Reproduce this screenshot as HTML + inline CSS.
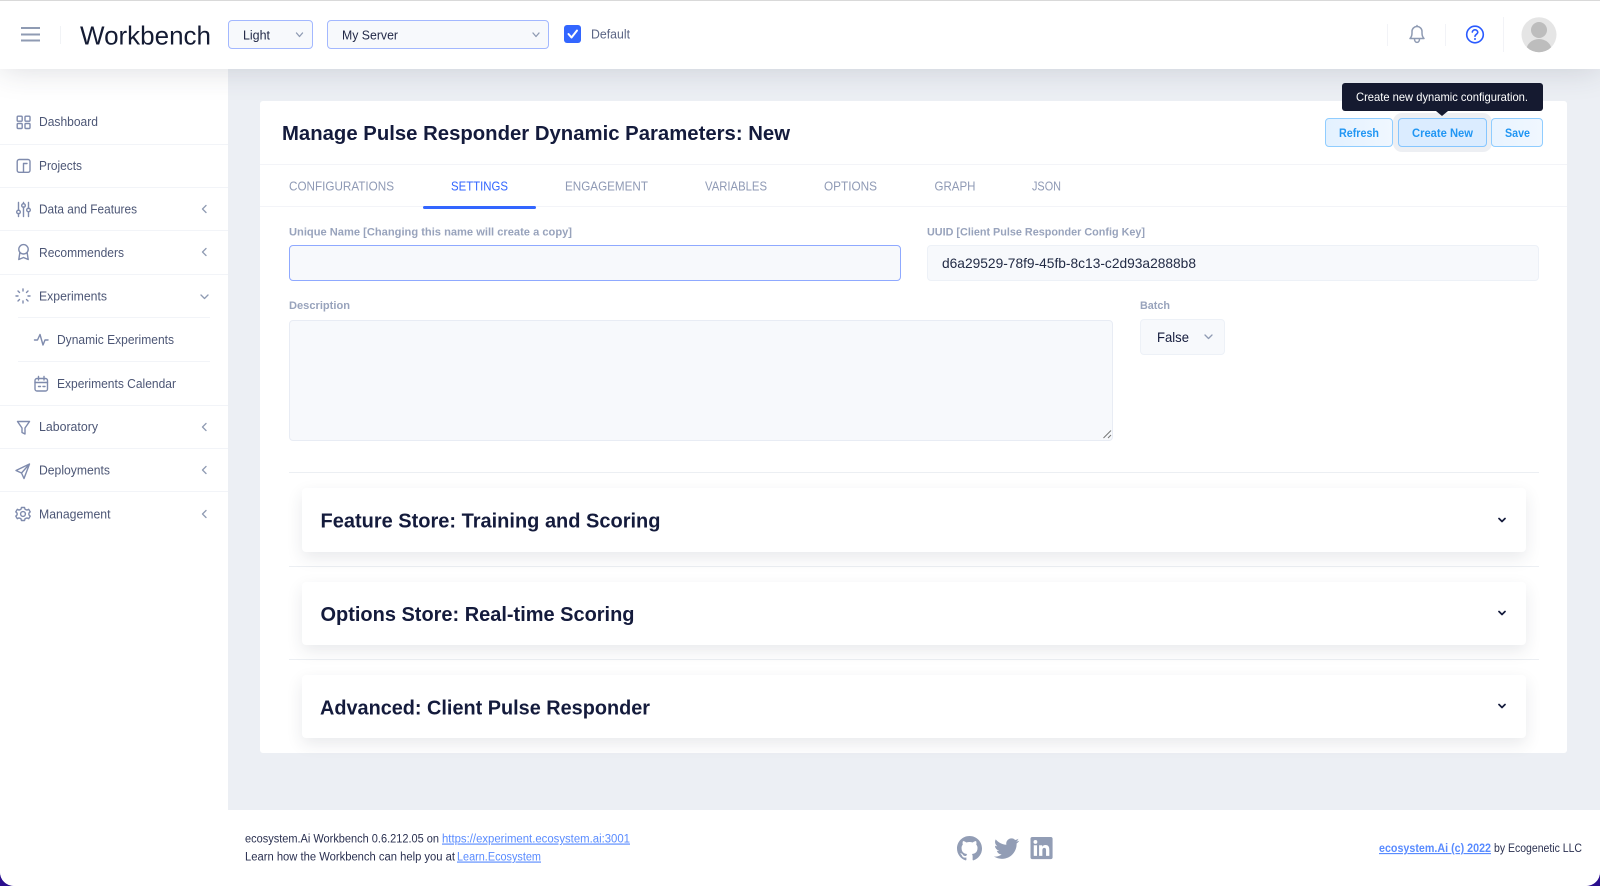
<!DOCTYPE html>
<html lang="en">
<head>
<meta charset="utf-8">
<title>Workbench</title>
<style>
html,body{margin:0;padding:0;width:1600px;height:886px;overflow:hidden;background:#2b0f8e;font-family:"Liberation Sans",sans-serif}
#app{position:absolute;left:0;top:0;width:1600px;height:886px;background:#ecEff4;border-radius:0 0 14px 14px;overflow:hidden}
.b{position:absolute;box-sizing:border-box}
svg{position:absolute;left:0;top:0}
text{font-family:"Liberation Sans",sans-serif}
.n{font-size:13px;fill:#4c5675}
.tab{font-size:13px;fill:#8f9ab5}
.lb{font-size:11px;font-weight:700;fill:#98a3bc}
.btn{font-size:11.5px;font-weight:700;fill:#2196f3}
.h{font-size:20px;font-weight:700;fill:#141b3c}
.f{font-size:11.5px;fill:#2a3050}
.l{font-size:11.5px;fill:#598bff;text-decoration:underline}
.ic{fill:none;stroke:#7f8bad;stroke-width:1.4;stroke-linecap:round;stroke-linejoin:round}
.ch{fill:none;stroke:#8f9bb3;stroke-width:1.3;stroke-linecap:round;stroke-linejoin:round}
.dk{fill:none;stroke:#141b3c;stroke-width:1.7;stroke-linecap:round;stroke-linejoin:round}
</style>
</head>
<body>
<div id="app">
  <div class="b" style="left:0;top:60px;width:228px;height:826px;background:#fff"></div>
  <div class="b" style="left:228px;top:810px;width:1372px;height:76px;background:#fff"></div>
  <div class="b" style="left:0;top:0;width:1600px;height:69px;background:#fff;border-top:1px solid #d9d9d9;box-shadow:0 0 32px rgba(44,51,73,.18)"></div>

  <div class="b" style="left:260px;top:101px;width:1307px;height:652px;background:#fff;border-radius:3px"></div>
  <div class="b" style="left:260px;top:164px;width:1307px;height:1px;background:#f3f4f8"></div>
  <div class="b" style="left:260px;top:206px;width:1307px;height:1px;background:#f3f4f8"></div>
  <div class="b" style="left:423px;top:206px;width:113px;height:3px;background:#3366ff;border-radius:2px"></div>

  <div class="b" style="left:289px;top:245px;width:612px;height:36px;background:#f7f9fc;border:1px solid #8fa9ff;border-radius:4px"></div>
  <div class="b" style="left:927px;top:245px;width:612px;height:36px;background:#f7f9fc;border:1px solid #edf1f7;border-radius:4px"></div>
  <div class="b" style="left:289px;top:320px;width:824px;height:121px;background:#f7f9fc;border:1px solid #e8ecf4;border-radius:4px"></div>
  <div class="b" style="left:1140px;top:319px;width:85px;height:36px;background:#f7f9fc;border:1px solid #edf1f7;border-radius:4px"></div>

  <div class="b" style="left:289px;top:472px;width:1250px;height:1px;background:#eceff3"></div>
  <div class="b" style="left:289px;top:566px;width:1250px;height:1px;background:#eceff3"></div>
  <div class="b" style="left:289px;top:659px;width:1250px;height:1px;background:#eceff3"></div>
  <div class="b" style="left:302px;top:488px;width:1224px;height:64px;background:#fff;border-radius:4px;box-shadow:0 6px 16px rgba(44,51,73,.10)"></div>
  <div class="b" style="left:302px;top:582px;width:1224px;height:63px;background:#fff;border-radius:4px;box-shadow:0 6px 16px rgba(44,51,73,.10)"></div>
  <div class="b" style="left:302px;top:675px;width:1224px;height:63px;background:#fff;border-radius:4px;box-shadow:0 6px 16px rgba(44,51,73,.10)"></div>

  <div class="b" style="left:228px;top:20px;width:85px;height:29px;background:#f7f9fc;border:1px solid #a3b8ff;border-radius:4px"></div>
  <div class="b" style="left:327px;top:20px;width:222px;height:29px;background:#f7f9fc;border:1px solid #a3b8ff;border-radius:4px"></div>
  <div class="b" style="left:564px;top:25px;width:17px;height:18px;background:#3366ff;border-radius:3px"></div>

  <div class="b" style="left:1325px;top:118px;width:68px;height:29px;background:linear-gradient(90deg,#e3f1ff,#f0f7ff);border:1px solid #90cdff;border-radius:4px"></div>
  <div class="b" style="left:1398px;top:118px;width:89px;height:29px;background:#dbecff;border:1px solid #86c6ff;border-radius:4px;box-shadow:0 0 0 5px rgba(143,155,179,.16)"></div>
  <div class="b" style="left:1491px;top:118px;width:52px;height:29px;background:linear-gradient(90deg,#e9f4ff,#f0f7ff);border:1px solid #90cdff;border-radius:4px"></div>
  <div class="b" style="left:1342px;top:83px;width:201px;height:28px;background:#151a30;border-radius:3px"></div>

  <svg width="1600" height="886" viewBox="0 0 1600 886" xmlns="http://www.w3.org/2000/svg">
    <!-- header -->
    <path d="M21 28H40M21 34.500H40M21 40.500H40" stroke="#8f9bb3" stroke-width="2"/>
    <path d="M60.500 26V44" stroke="#f1f3f6"/>
    <text x="80" y="44.500" font-size="26" fill="#141b33" textLength="131" lengthAdjust="spacingAndGlyphs">Workbench</text>
    <text x="243" y="39.500" font-size="13" fill="#1f2645" textLength="27" lengthAdjust="spacingAndGlyphs">Light</text>
    <text x="342" y="39.500" font-size="13" fill="#1f2645" textLength="56" lengthAdjust="spacingAndGlyphs">My Server</text>
    <path class="ch" d="M296.500 33L299.500 36.500L302.500 33M533 33L536 36.500L539 33"/>
    <path d="M568.500 34L571.500 37.500L577 30.500" fill="none" stroke="#fff" stroke-width="2" stroke-linecap="round" stroke-linejoin="round"/>
    <text x="591" y="38.500" font-size="12.500" fill="#5c6685" textLength="39" lengthAdjust="spacingAndGlyphs">Default</text>

    <path d="M1387.500 24V46M1445.500 24V46M1503.500 17V52" stroke="#f2f3f7"/>
    <path d="M1410 38.500c1.500-1.500 2-3 2-5.500v-1.500a5 5 0 0 1 10 0V33c0 2.500.5 4 2 5.500zM1414.500 39c0 4.500 5 4.500 5 0M1417 26.500V25.500" fill="none" stroke="#8f9bb3" stroke-width="1.500" stroke-linejoin="round" stroke-linecap="round"/>
    <circle cx="1475" cy="34.500" r="8.300" fill="none" stroke="#2a5bff" stroke-width="1.600"/>
    <path d="M1472.300 32a2.800 2.800 0 0 1 5.500.300c0 1.900-2.800 2.100-2.800 4" fill="none" stroke="#2a5bff" stroke-width="1.600" stroke-linecap="round"/>
    <circle cx="1475" cy="39" r="1" fill="#2a5bff"/>
    <clipPath id="av"><circle cx="1539" cy="34.700" r="17.500"/></clipPath>
    <g clip-path="url(#av)">
      <rect x="1520" y="16" width="38" height="38" fill="#e5e5e5"/>
      <circle cx="1539" cy="30" r="8" fill="#bdbdbd"/>
      <ellipse cx="1539" cy="50" rx="12.500" ry="11" fill="#bdbdbd"/>
    </g>

    <!-- sidebar dividers -->
    <path d="M0 144.500H228M0 187.500H228M0 230.500H228M0 274.500H228M18 317.500H210M18 361.500H210M0 405.500H228M0 448.500H228M0 491.500H228" stroke="#f2f4f8"/>

    <!-- sidebar text -->
    <text class="n" x="39" y="126" textLength="59" lengthAdjust="spacingAndGlyphs">Dashboard</text>
    <text class="n" x="39" y="170" textLength="43" lengthAdjust="spacingAndGlyphs">Projects</text>
    <text class="n" x="39" y="213.500" textLength="98" lengthAdjust="spacingAndGlyphs">Data and Features</text>
    <text class="n" x="39" y="257" textLength="85" lengthAdjust="spacingAndGlyphs">Recommenders</text>
    <text class="n" x="39" y="300.500" textLength="68" lengthAdjust="spacingAndGlyphs">Experiments</text>
    <text class="n" x="57" y="344" textLength="117" lengthAdjust="spacingAndGlyphs">Dynamic Experiments</text>
    <text class="n" x="57" y="388" textLength="119" lengthAdjust="spacingAndGlyphs">Experiments Calendar</text>
    <text class="n" x="39" y="431" textLength="59" lengthAdjust="spacingAndGlyphs">Laboratory</text>
    <text class="n" x="39" y="474.500" textLength="71" lengthAdjust="spacingAndGlyphs">Deployments</text>
    <text class="n" x="39" y="518.500" textLength="71.500" lengthAdjust="spacingAndGlyphs">Management</text>

    <!-- sidebar chevrons -->
    <path class="ch" d="M206 205.500L202.500 209L206 212.500M206 248.500L202.500 252L206 255.500M206 423.500L202.500 427L206 430.500M206 466.500L202.500 470L206 473.500M206 510.500L202.500 514L206 517.500M201 295L204.500 298.500L208 295"/>

    <!-- sidebar icons -->
    <g class="ic">
      <rect x="17.200" y="116.200" width="5" height="5" rx="1"/><rect x="25" y="116.200" width="5" height="5" rx="1"/><rect x="17.200" y="123.500" width="5" height="5" rx="1"/><rect x="25" y="123.500" width="5" height="5" rx="1"/>
      <rect x="17.200" y="159.500" width="12.800" height="12.800" rx="2"/><path d="M23.500 172V163.500H27"/>
      <path d="M18.500 202.500V210M18.500 213.500V216.500M23.500 202.500V203.500M23.500 207V216.500M28.500 202.500V208.500M28.500 212V216.500"/><circle cx="18.500" cy="212" r="1.800"/><circle cx="23.500" cy="205.500" r="1.800"/><circle cx="28.500" cy="210" r="1.800"/>
      <circle cx="23.500" cy="249.300" r="4.700"/><path d="M19.800 253L18.800 259.500L23.500 257.500L28.200 259.500L27.200 253"/>
      <path d="M23 289V291M23 301V303M16 296H18M28 296H30M18 291L19.500 292.500M26.500 299.500L28 301M18 301L19.500 299.500M26.500 292.500L28 291"/>
      <path d="M34.500 340H37.500L40 334.500L43 345L45 340H48"/>
      <rect x="35" y="378.500" width="12.500" height="12.500" rx="2"/><path d="M35 382.500H47.500M38.500 376.500V380M44 376.500V380M38.500 386.500H40.500M43 386.500H45"/>
      <path d="M17.500 421.500H29.500L25 428V434L22 432.500V428Z"/>
      <path d="M29.500 464L16 470.500L21.500 473L24 478.500ZM21.500 473L29.500 464"/>
      <circle cx="23" cy="514" r="2.400"/><path d="M21.500 507.500h3l.6 1.800 1.900.8 1.700-.8 1.500 2.600-1.300 1.200v1.800l1.300 1.200-1.500 2.600-1.700-.8-1.900.8-.6 1.800h-3l-.6-1.800-1.900-.8-1.700.8-1.500-2.600 1.300-1.200v-1.800l-1.300-1.200 1.500-2.600 1.700.8 1.900-.8z"/>
    </g>

    <!-- card header -->
    <text x="282" y="140" font-size="20" font-weight="700" fill="#141b3c" textLength="508" lengthAdjust="spacingAndGlyphs">Manage Pulse Responder Dynamic Parameters: New</text>

    <!-- tooltip -->
    <path d="M1436 111H1448L1442 116Z" fill="#151a30"/>
    <text x="1356" y="101" font-size="12" fill="#fff" textLength="172" lengthAdjust="spacingAndGlyphs">Create new dynamic configuration.</text>
    <text class="btn" x="1339" y="137" textLength="40" lengthAdjust="spacingAndGlyphs">Refresh</text>
    <text class="btn" x="1412" y="137" textLength="61" lengthAdjust="spacingAndGlyphs">Create New</text>
    <text class="btn" x="1505" y="137" textLength="25" lengthAdjust="spacingAndGlyphs">Save</text>

    <!-- tabs -->
    <text class="tab" x="289" y="190.500" textLength="105" lengthAdjust="spacingAndGlyphs">CONFIGURATIONS</text>
    <text class="tab" x="451" y="190.500" textLength="57" lengthAdjust="spacingAndGlyphs" style="fill:#3366ff">SETTINGS</text>
    <text class="tab" x="565" y="190.500" textLength="83" lengthAdjust="spacingAndGlyphs">ENGAGEMENT</text>
    <text class="tab" x="705" y="190.500" textLength="62" lengthAdjust="spacingAndGlyphs">VARIABLES</text>
    <text class="tab" x="824" y="190.500" textLength="53" lengthAdjust="spacingAndGlyphs">OPTIONS</text>
    <text class="tab" x="934.500" y="190.500" textLength="41" lengthAdjust="spacingAndGlyphs">GRAPH</text>
    <text class="tab" x="1032" y="190.500" textLength="29" lengthAdjust="spacingAndGlyphs">JSON</text>

    <!-- form -->
    <text class="lb" x="289" y="235.500" textLength="283" lengthAdjust="spacingAndGlyphs">Unique Name [Changing this name will create a copy]</text>
    <text class="lb" x="927" y="235.500" textLength="218" lengthAdjust="spacingAndGlyphs">UUID [Client Pulse Responder Config Key]</text>
    <text x="942" y="268" font-size="14" fill="#222b45" textLength="254" lengthAdjust="spacingAndGlyphs">d6a29529-78f9-45fb-8c13-c2d93a2888b8</text>
    <text class="lb" x="289" y="309" textLength="61" lengthAdjust="spacingAndGlyphs">Description</text>
    <text class="lb" x="1140" y="309" textLength="30" lengthAdjust="spacingAndGlyphs">Batch</text>
    <text x="1157" y="342" font-size="14" fill="#141b3c" textLength="32" lengthAdjust="spacingAndGlyphs">False</text>
    <path class="ch" d="M1205 335L1208.500 338.500L1212 335"/>
    <path d="M1103.500 438L1111 430.500M1108 438L1111 435" stroke="#777" stroke-width="1" fill="none"/>

    <!-- accordions -->
    <text class="h" x="320.500" y="527.300" textLength="340" lengthAdjust="spacingAndGlyphs">Feature Store: Training and Scoring</text>
    <text class="h" x="320.500" y="620.800" textLength="314" lengthAdjust="spacingAndGlyphs">Options Store: Real-time Scoring</text>
    <text class="h" x="320" y="714.300" textLength="330" lengthAdjust="spacingAndGlyphs">Advanced: Client Pulse Responder</text>
    <path class="dk" d="M1499 518.500L1502 521.500L1505 518.500M1499 611.500L1502 614.500L1505 611.500M1499 704.500L1502 707.500L1505 704.500"/>

    <!-- footer -->
    <text class="f" x="245" y="842.500" textLength="194" lengthAdjust="spacingAndGlyphs">ecosystem.Ai Workbench 0.6.212.05 on</text>
    <text class="l" x="442" y="842.500" textLength="188" lengthAdjust="spacingAndGlyphs">https://experiment.ecosystem.ai:3001</text>
    <text class="f" x="245" y="860.500" textLength="210" lengthAdjust="spacingAndGlyphs">Learn how the Workbench can help you at</text>
    <text class="l" x="457" y="860.500" textLength="84" lengthAdjust="spacingAndGlyphs">Learn.Ecosystem</text>
    <text class="l" x="1379" y="852" textLength="112" lengthAdjust="spacingAndGlyphs" style="font-weight:700">ecosystem.Ai (c) 2022</text>
    <text class="f" x="1494" y="852" textLength="88" lengthAdjust="spacingAndGlyphs">by Ecogenetic LLC</text>

    <g fill="#929db5">
      <path transform="translate(957 836) scale(1.5625)" d="M8 0C3.58 0 0 3.58 0 8c0 3.54 2.29 6.53 5.47 7.59.4.07.55-.17.55-.38 0-.19-.01-.82-.01-1.49-2.01.37-2.53-.49-2.69-.94-.09-.23-.48-.94-.82-1.13-.28-.15-.68-.52-.01-.53.63-.01 1.08.58 1.23.82.72 1.21 1.87.87 2.33.66.07-.52.28-.87.51-1.07-1.78-.2-3.64-.89-3.64-3.95 0-.87.31-1.59.82-2.15-.08-.2-.36-1.02.08-2.12 0 0 .67-.21 2.2.82.64-.18 1.32-.27 2-.27.68 0 1.36.09 2 .27 1.53-1.04 2.2-.82 2.2-.82.44 1.1.16 1.92.08 2.12.51.56.82 1.27.82 2.15 0 3.07-1.87 3.75-3.65 3.95.29.25.54.73.54 1.48 0 1.07-.01 1.93-.01 2.2 0 .21.15.46.55.38A8.013 8.013 0 0016 8c0-4.42-3.58-8-8-8z"/>
      <path transform="translate(994 836) scale(1.05)" d="M23.953 4.57a10 10 0 01-2.825.775 4.958 4.958 0 002.163-2.723c-.951.555-2.005.959-3.127 1.184a4.92 4.92 0 00-8.384 4.482C7.69 8.095 4.067 6.13 1.64 3.162a4.822 4.822 0 00-.666 2.475c0 1.71.87 3.213 2.188 4.096a4.904 4.904 0 01-2.228-.616v.06a4.923 4.923 0 003.946 4.827 4.996 4.996 0 01-2.212.085 4.936 4.936 0 004.604 3.417 9.867 9.867 0 01-6.102 2.105c-.39 0-.779-.023-1.17-.067a13.995 13.995 0 007.557 2.209c9.053 0 13.998-7.496 13.998-13.985 0-.21 0-.42-.015-.63A9.935 9.935 0 0024 4.59z"/>
      <path transform="translate(1030.500 837) scale(.92)" d="M20.447 20.452h-3.554v-5.569c0-1.328-.027-3.037-1.852-3.037-1.853 0-2.136 1.445-2.136 2.939v5.667H9.351V9h3.414v1.561h.046c.477-.9 1.637-1.85 3.37-1.85 3.601 0 4.267 2.37 4.267 5.455v6.286zM5.337 7.433a2.062 2.062 0 01-2.063-2.065 2.064 2.064 0 112.063 2.065zm1.782 13.019H3.555V9h3.564v11.452zM22.225 0H1.771C.792 0 0 .774 0 1.729v20.542C0 23.227.792 24 1.771 24h20.451C23.2 24 24 23.227 24 22.271V1.729C24 .774 23.2 0 22.222 0h.003z"/>
    </g>
  </svg>
</div>
</body>
</html>
